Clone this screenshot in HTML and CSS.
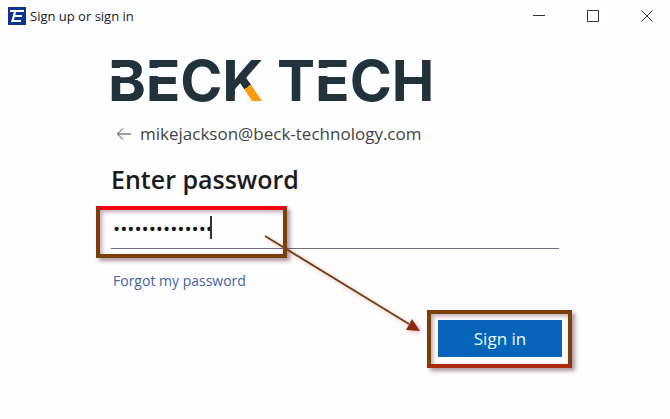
FILE: index.html
```
<!DOCTYPE html>
<html lang="en">
<head>
  <meta charset="UTF-8" />
  <meta name="viewport" content="width=device-width, initial-scale=1.0"/>
  <title>Sign up or sign in</title>
  <link rel="stylesheet" href="styles.css">
</head>
<body>
  <header class="titlebar">
    <svg class="app-icon" viewBox="0 0 18 18" aria-hidden="true">
      <rect width="18" height="18" fill="#0b3590"/>
      <path d="M2 4H16M7 5L4.500 14H13M6 9H14" fill="none" stroke="#fff" stroke-width="2.200"/>
    </svg>
    <span class="window-title">Sign up or sign in</span>
    <div class="window-buttons">
      <button type="button" aria-label="Minimize"><svg viewBox="0 0 12 12"><path d="M0 5.500H12"/></svg></button>
      <button type="button" aria-label="Maximize"><svg viewBox="0 0 12 12"><path d="M.5 .5H11.500V11.500H.5Z"/></svg></button>
      <button type="button" aria-label="Close"><svg viewBox="0 0 12 12"><path d="M.5 .5L11.500 11.500M11.500 .5L.5 11.500"/></svg></button>
    </div>
  </header>

  <main class="container">
    <div class="logo" aria-label="BECK TECH"><span class="cut-b">B</span><span class="cut-e">E</span>C<span class="cut-k">K</span> T<span class="cut-e">E</span>CH</div>

    <div class="account">
      <button type="button" class="back" aria-label="Back">
        <svg viewBox="0 0 16 14"><path d="M15 7H1.500M7 1.500L1.500 7L7 12.500"/></svg>
      </button>
      <span>mikejackson@beck-technology.com</span>
    </div>

    <form class="login">
      <h1><label for="password">Enter password</label></h1>
      <div class="field">
        <input type="password" id="password" value="abcdefghijklmn" />
        <span class="caret"></span>
        <span class="highlight highlight-field"></span>
      </div>
      <a class="forgot" href="#">Forgot my password</a>
      <div class="actions">
        <button type="submit" class="submit">Sign in</button>
        <span class="highlight highlight-button"></span>
        <svg class="arrow" viewBox="0 0 160 104" aria-hidden="true">
          <path d="M2 3L146 91" fill="none" stroke="#7b3f0c" stroke-width="2"/>
          <path d="M157 98L143 97L149 86Z" fill="#8a2c0c"/>
        </svg>
      </div>
    </form>
  </main>
</body>
</html>
```
FILE: styles.css
```
* {
  box-sizing: border-box;
}

body {
  margin: 0;
  background: #fefdff;
  color: #1b1b1b;
  font-family: "Open Sans", "Noto Sans", sans-serif;
}

button {
  padding: 0;
  border: none;
  background: none;
  font-family: inherit;
  cursor: pointer;
}

.titlebar {
  display: flex;
  align-items: center;
  height: 32px;
  padding-left: 8px;
}

.app-icon {
  width: 18px;
  height: 18px;
  margin-right: 4px;
}

.window-title {
  font-size: 13px;
}

.window-buttons {
  display: flex;
  margin-left: auto;
}

.window-buttons button {
  display: flex;
  align-items: center;
  justify-content: center;
  width: 54px;
  height: 30px;
}

.window-buttons button:last-child {
  width: 50px;
  padding-left: 4px;
}

.window-buttons svg {
  width: 12px;
  height: 12px;
  fill: none;
  stroke: #333;
}

.container {
  padding: 20px 111px;
}

.logo {
  margin-left: -3px;
  font-family: Inter, sans-serif;
  font-size: 57px;
  font-weight: 700;
  line-height: 58px;
  color: #22323a;
  white-space: nowrap;
}

.cut-b,
.cut-e,
.cut-k {
  display: inline-block;
  color: transparent;
  -webkit-background-clip: text;
  background-clip: text;
}

.cut-b {
  background-image: linear-gradient(#22323a 16px, transparent 16px 24px, #22323a 24px), linear-gradient(90deg, transparent 18px, #22323a 18px);
}

.cut-e {
  background-image: linear-gradient(#22323a 16px, transparent 16px 24px, #22323a 24px);
}

/* lower leg of the K is the orange accent */
.cut-k {
  background-image: linear-gradient(90deg, #22323a 13px, transparent 13px), linear-gradient(145deg, #22323a 60%, #ff9a0a 60%);
}

.account {
  display: flex;
  align-items: center;
  gap: 8px;
  margin-top: 12px;
  padding-left: 5px;
  font-size: 17px;
  line-height: 24px;
  color: #444;
}

.back {
  display: flex;
}

.back svg {
  width: 16px;
  height: 14px;
  fill: none;
  stroke: #444;
}

h1 {
  margin: 14px 0 0;
  font-size: 25px;
  font-weight: 600;
  line-height: 38px;
}

.field {
  position: relative;
  margin-top: 10px;
}

.field input {
  display: block;
  width: 100%;
  height: 41px;
  padding: 2px 2px 0;
  border: none;
  border-bottom: 1px solid #716f85;
  outline: none;
  background: transparent;
  color: #111;
  font-family: "Open Sans", sans-serif;
  font-size: 19px;
}

.caret {
  position: absolute;
  left: 99px;
  top: 8px;
  width: 2px;
  height: 23px;
  background: #333;
}

/* call-out frames drawn over the form */
.highlight {
  position: absolute;
  border: 4px solid #7b3f0c;
  box-shadow: 3px 3px 4px rgba(70, 30, 45, 0.45), inset 2px 2px 4px rgba(90, 40, 60, 0.4);
  pointer-events: none;
}

.highlight-field {
  left: -15px;
  top: -2px;
  width: 191px;
  height: 52px;
  border-top-color: #f3030f;
}

.forgot {
  display: inline-block;
  margin: 20px 0 0 2px;
  font-size: 14px;
  line-height: 24px;
  color: #4463a0;
  text-decoration: none;
}

.actions {
  position: relative;
  display: flex;
  justify-content: flex-end;
  margin-top: 27px;
}

.submit {
  width: 124px;
  height: 37px;
  margin-right: -3px;
  background: #0864b8;
  color: #e4ffff;
  font-size: 17px;
}

.highlight-button {
  right: -13px;
  top: -10px;
  width: 145px;
  height: 58px;
  border-bottom-color: #ab2b10;
}

.arrow {
  position: absolute;
  right: 136px;
  bottom: 20px;
  width: 160px;
  height: 104px;
  filter: drop-shadow(2px 2px 2px rgba(180, 60, 100, 0.35));
  pointer-events: none;
}
```
